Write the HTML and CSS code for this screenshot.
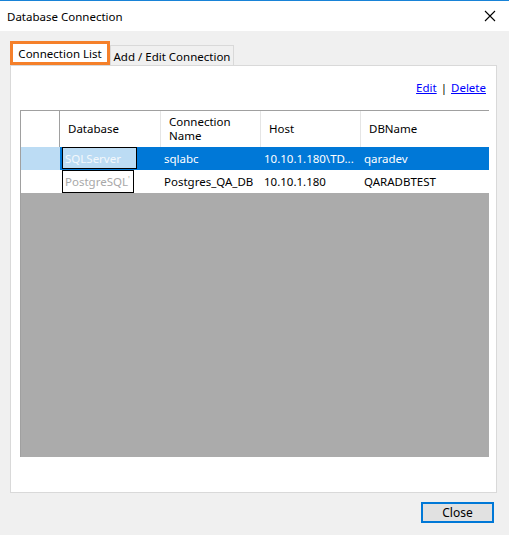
FILE: index.html
```html
<!DOCTYPE html>
<html>
<head>
<meta charset="utf-8">
<link rel="stylesheet" href="styles.css">
</head>
<body>
<div class="window">
  <div class="titlebar">
    <span class="title">Database Connection</span>
    <svg class="close-x" width="12" height="12" viewBox="0 0 12 12"><path d="M1 1 L11 11 M11 1 L1 11" stroke="#000" stroke-width="1.1" fill="none"/></svg>
  </div>
  <div class="content">
    <div class="tabs">
      <div class="tab active">Connection List</div>
      <div class="tab">Add / Edit Connection</div>
    </div>
    <div class="panel">
      <div class="links"><a href="#">Edit</a><span class="sep">|</span><a href="#">Delete</a></div>
      <div class="grid">
        <div class="row head">
          <div class="c rh"></div>
          <div class="c c1">Database</div>
          <div class="c c2">Connection<br>Name</div>
          <div class="c c3">Host</div>
          <div class="c c4">DBName</div>
        </div>
        <div class="row sel">
          <div class="c rh"></div>
          <div class="c c1"><span class="combo">SQLServer</span></div>
          <div class="c c2">sqlabc</div>
          <div class="c c3">10.10.1.180\TD...</div>
          <div class="c c4">qaradev</div>
        </div>
        <div class="row">
          <div class="c rh"></div>
          <div class="c c1"><span class="combo">PostgreSQL<span class="tick">'</span></span></div>
          <div class="c c2">Postgres_QA_DB</div>
          <div class="c c3">10.10.1.180</div>
          <div class="c c4">QARADBTEST</div>
        </div>
        <div class="empty"></div>
      </div>
    </div>
    <div class="footer">
      <button class="btn">Close</button>
    </div>
  </div>
</div>
</body>
</html>
```
FILE: styles.css
```css
html, body {
  margin: 0;
  padding: 0;
}
body {
  background: #f0f0f0;
  font-family: "Noto Sans", "Open Sans", sans-serif;
  font-size: 11.5px;
  color: #000;
}
.window {
  width: 509px;
  height: 535px;
  display: flex;
  flex-direction: column;
  overflow: hidden;
}
.titlebar {
  height: 30px;
  border-top: 1px solid #1883d7;
  background: #fff;
  display: flex;
  align-items: center;
  justify-content: space-between;
  padding: 0 13px 0 7px;
  font-size: 11.5px;
}
.close-x {
  display: block;
}
.content {
  padding: 10px 12px 0 10px;
  display: flex;
  flex-direction: column;
}
.tabs {
  display: flex;
  align-items: flex-end;
  height: 24px;
}
.tab {
  box-sizing: border-box;
  height: 20px;
  width: 124px;
  border: 1px solid #d9d9d9;
  border-bottom: none;
  background: #f0f0f0;
  display: flex;
  align-items: center;
  justify-content: center;
  padding-top: 1px;
}
.tab.active {
  width: 100px;
  height: 24px;
  border: 3px solid #f5802a;
  background: #fff;
  padding-top: 0;
}
.panel {
  box-sizing: border-box;
  height: 428px;
  background: #fff;
  border: 1px solid #d9d9d9;
  padding: 14px 7px 0 9px;
  display: flex;
  flex-direction: column;
}
.links {
  height: 30px;
  display: flex;
  justify-content: flex-end;
  align-items: flex-start;
  padding-right: 3px;
}
.links a {
  color: #0000ff;
  text-decoration: underline;
}
.sep {
  margin: 0 4px;
}
.grid {
  height: 347px;
  border-top: 1px solid #a0a0a0;
  border-left: 1px solid #a0a0a0;
  display: flex;
  flex-direction: column;
  box-sizing: border-box;
}
.row {
  display: flex;
  height: 23px;
}
.row.head {
  height: 36px;
}
.c {
  box-sizing: border-box;
  display: flex;
  align-items: center;
  padding-left: 4px;
  white-space: nowrap;
}
.rh { width: 39px; }
.c1 { width: 100px; padding-left: 2px; }
.c2 { width: 100px; }
.c3 { width: 100px; }
.c4 { flex: 1; }
.head .c {
  padding-left: 8px;
  border-left: 1px solid #e5e5e5;
  line-height: 14px;
}
.head .rh {
  border-left: none;
  border-right: 1px solid #a0a0a0;
}
.head .c1 { border-left: none; }
.row.sel .c {
  background: #0078d7;
  color: #fff;
}
.row.sel .rh {
  background: #bcdcf4;
}
.combo {
  box-sizing: border-box;
  border: 1px solid #000;
  height: 22px;
  display: flex;
  align-items: center;
  padding-left: 2px;
  color: #a8a8a8;
  background: #fff;
}
.sel .combo {
  width: 75px;
  height: 22px;
  background: #bcdcf4;
  color: #f4f8fb;
  align-self: flex-start;
}
.row:not(.sel) .combo {
  width: 72px;
  height: 23px;
}
.tick {
  font-size: 8px;
  align-self: flex-start;
  margin-top: 3px;
}
.empty {
  flex: 1;
  background: #ababab;
}
.footer {
  display: flex;
  justify-content: flex-end;
  padding: 9px 3px 0 0;
}
.btn {
  box-sizing: border-box;
  width: 73px;
  height: 21px;
  border: 2px solid #0078d7;
  background: #e1e1e1;
  font-family: inherit;
  font-size: 12px;
  padding: 0;
  color: #000;
}
```
